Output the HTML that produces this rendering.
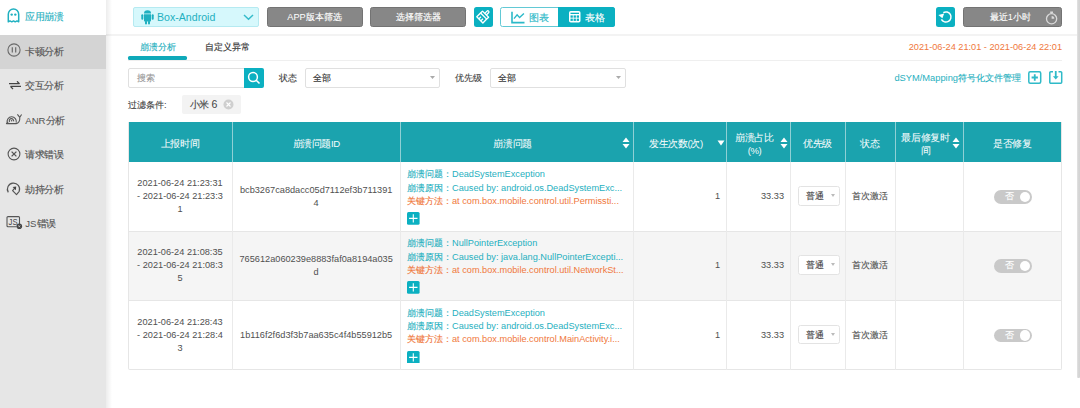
<!DOCTYPE html>
<html><head><meta charset="utf-8">
<style>
*{margin:0;padding:0;box-sizing:border-box;}
html,body{width:1080px;height:408px;overflow:hidden;background:#fff;font-family:"Liberation Sans",sans-serif;color:#333;}
.abs{position:absolute;}
#side{position:absolute;left:0;top:0;width:105.5px;height:408px;background:#e6e6e6;}
.si{position:absolute;left:0;width:105.5px;height:34.5px;font-size:9.6px;color:#525252;}
.si .c{letter-spacing:-0.55px;}
.si .t{position:absolute;left:25.3px;top:0px;line-height:34.5px;white-space:nowrap;}
.si svg{position:absolute;}
.btn{position:absolute;top:7.2px;height:19.5px;border-radius:2.5px;font-size:9.2px;line-height:19.5px;text-align:center;color:#fff;white-space:nowrap;}
.gray{background:#878787;border:1px solid #737373;line-height:19px;}
.teal{background:#0bb0c1;}
.hc{position:absolute;top:122px;height:40px;display:flex;align-items:center;justify-content:center;text-align:center;color:#f6fbfc;font-size:9.6px;letter-spacing:-0.4px;line-height:13px;padding-top:2px;}
.tc{position:absolute;display:flex;align-items:center;justify-content:center;font-size:9.2px;line-height:13px;color:#505050;padding-top:0px;}
.pc{position:absolute;font-size:9.2px;line-height:13.3px;white-space:nowrap;}
.pc .b{color:#1fb0c0;} .pc .o{color:#f0783c;}
.sel{width:42px;height:19.5px;border:1px solid #e3e3e3;border-radius:2.5px;background:#fff;font-size:9.2px;line-height:19.5px;padding-left:7.3px;color:#444;}
.tog{width:38px;height:13.5px;border-radius:7px;background:#c9c9c9;color:#fff;font-size:9px;line-height:13.5px;padding-left:11.5px;}
.tog:after{content:"";position:absolute;right:1.5px;top:1.5px;width:10.5px;height:10.5px;border-radius:50%;background:#fff;}
.c{-webkit-text-stroke:0.14px currentColor;} .hc .c{-webkit-text-stroke:0.06px currentColor;}
</style></head><body>
<div id="side">
  <div class="si" style="top:0;background:#fff;color:#1fb0c0;">
    <svg style="left:7.3px;top:8.3px" width="13" height="15" viewBox="0 0 13 15"><path d="M1.3 13.8 V6.2 A5.2 5.2 0 0 1 11.7 6.2 V13.8 L10 12.9 L8.2 13.8 L6.5 12.9 L4.8 13.8 L3 12.9 Z" fill="none" stroke="#1fb0c0" stroke-width="1.5" stroke-linejoin="round"/><circle cx="4.7" cy="6.6" r="1.2" fill="#1fb0c0"/><circle cx="8.3" cy="6.6" r="1.2" fill="#1fb0c0"/></svg>
    <span class="t"><span class="c">应用崩溃</span></span></div>
  <div class="si" style="top:34.5px;background:#d4d4d4;">
    <svg style="left:6.8px;top:8.7px" width="14" height="14" viewBox="0 0 14 14"><circle cx="7" cy="7" r="6.1" fill="none" stroke="#6a6a6a" stroke-width="1.1"/><path d="M5.3 4.3V9.5M8.7 4.3V9.5" stroke="#6a6a6a" stroke-width="1.2"/></svg>
    <span class="t"><span class="c">卡顿分析</span></span></div>
  <div class="si" style="top:69px;">
    <svg style="left:9px;top:12px" width="12" height="9" viewBox="0 0 12 9"><path d="M0 2.7H10.6 M8 0.3 L10.6 2.9 M12 5.4H1.4 M4 8 L1.4 5.4" fill="none" stroke="#444" stroke-width="1.3"/></svg>
    <span class="t"><span class="c">交互分析</span></span></div>
  <div class="si" style="top:103.5px;">
    <svg style="left:3.8px;top:9.2px" width="19" height="12" viewBox="0 0 19 12"><path d="M3.4 9.9 A4.6 4.6 0 1 1 12.2 9.6" fill="none" stroke="#555" stroke-width="1.1"/><path d="M5.6 9 A2.2 2.2 0 1 1 9.6 8.3" fill="none" stroke="#555" stroke-width="1.1"/><circle cx="7.6" cy="7.8" r="0.8" fill="#555"/><path d="M2.3 10.6 H12.3 C14.5 10.6 16 8 15.8 4.3 M15.8 4.3 L13.4 1.3 M15.8 4.3 L17.6 1.5" fill="none" stroke="#555" stroke-width="1.1"/><path d="M1.8 11.1 Q2 9.2 4.2 9 L4.6 11.1 Z" fill="#555"/></svg>
    <span class="t">ANR<span class="c">分析</span></span></div>
  <div class="si" style="top:138px;">
    <svg style="left:6.8px;top:8.6px" width="14" height="14" viewBox="0 0 14 14"><circle cx="7" cy="7" r="5.9" fill="none" stroke="#555" stroke-width="1.1"/><path d="M4.6 4.6L9.4 9.4M9.4 4.6L4.6 9.4" stroke="#555" stroke-width="1.3"/></svg>
    <span class="t"><span class="c">请求错误</span></span></div>
  <div class="si" style="top:172.5px;">
    <svg style="left:5px;top:8.5px" width="18" height="18" viewBox="0 0 18 18"><path d="M3.3 11.4 A6.1 6.1 0 1 1 14.2 10.3 L11.5 13.6 L7.6 9.6 L10.3 6.5" fill="none" stroke="#555" stroke-width="1.15" stroke-linejoin="round"/><path d="M11.2 5.6 L7.6 5.9 L10.9 9.2 Z" fill="#444"/></svg>
    <span class="t"><span class="c">劫持分析</span></span></div>
  <div class="si" style="top:207px;">
    <svg style="left:6px;top:8.8px" width="17" height="14" viewBox="0 0 17 14"><path d="M13.5 8.3 V1.6 A1 1 0 0 0 12.5 0.6 H2 A1 1 0 0 0 1 1.6 V9.8 A1 1 0 0 0 2 10.8 H10.5" fill="none" stroke="#555" stroke-width="1.1"/><text x="2.6" y="8.8" font-size="8.4" font-family="Liberation Sans" fill="#4a4a4a" textLength="9" lengthAdjust="spacingAndGlyphs">JS</text><circle cx="13.3" cy="10.3" r="2.8" fill="#444"/><path d="M12.4 9.4 L14.2 11.2 M14.2 9.4 L12.4 11.2" stroke="#ccc" stroke-width="0.8"/></svg>
    <span class="t">JS<span class="c">错误</span></span></div>
</div>

<div class="abs" style="left:105.5px;top:34px;width:971.5px;height:2px;background:#f3f3f3;"></div>
<div class="abs" style="left:105.5px;top:0;width:6px;height:408px;background:linear-gradient(to right,rgba(0,0,0,0.075),rgba(0,0,0,0));"></div>
<div class="abs" style="left:1077.2px;top:0;width:2.8px;height:377.6px;background:linear-gradient(to right,#e3e3e3,#d4d4d4 60%);border-radius:0 0 1px 1px;"></div>

<!-- top bar -->
<div class="abs" style="left:132.5px;top:7.3px;width:126.5px;height:19.5px;background:#d6f8fc;border:1px solid #b5eaf1;border-radius:2px;"></div>
<svg class="abs" style="left:141px;top:10px" width="13" height="15" viewBox="0 0 13 15"><path d="M3 4.2 H10 V10.8 A0.8 0.8 0 0 1 9.2 11.6 H3.8 A0.8 0.8 0 0 1 3 10.8 Z" fill="#1fb0c0"/><path d="M3 3.6 A3.5 3.3 0 0 1 10 3.6 Z" fill="#1fb0c0"/><rect x="0.3" y="4.3" width="2" height="5.4" rx="1" fill="#1fb0c0"/><rect x="10.7" y="4.3" width="2" height="5.4" rx="1" fill="#1fb0c0"/><rect x="4" y="10.5" width="2" height="4" rx="1" fill="#1fb0c0"/><rect x="7" y="10.5" width="2" height="4" rx="1" fill="#1fb0c0"/></svg>
<div class="abs" style="left:157px;top:6.8px;line-height:20px;font-size:10.6px;color:#1fb0c0;">Box-Android</div>
<svg class="abs" style="left:243px;top:14px" width="11" height="7" viewBox="0 0 11 7"><path d="M1 1 L5.5 5.3 L10 1" fill="none" stroke="#35bccb" stroke-width="1.5"/></svg>

<div class="btn gray" style="left:266.5px;width:96px;">APP<span class="c">版本筛选</span></div>
<div class="btn gray" style="left:370px;width:96px;"><span class="c">选择筛选器</span></div>
<div class="btn teal" style="left:474px;width:19px;"></div>
<svg class="abs" style="left:474px;top:7px" width="19" height="19" viewBox="0 0 19 19"><g transform="translate(0.5 -0.8) rotate(45 9.5 9.5)" fill="none" stroke="#fff" stroke-width="1.35" stroke-linejoin="round"><path d="M8.4 7.3 V4.1 A1.1 1.1 0 0 1 10.6 4.1 V7.3"/><rect x="5.2" y="7.3" width="8.6" height="2.7"/><path d="M5.2 10 V15.4 H13.8 V10 M8.1 12.4 V15.4 M10.9 12.4 V15.4"/></g></svg>
<div class="abs" style="left:500.3px;top:7.2px;width:115px;height:19.5px;border:1px solid #62c9d5;border-radius:2.5px;background:#fff;"></div>
<div class="abs" style="left:558px;top:7.2px;width:57.3px;height:19.5px;background:#0bb0c1;border-radius:0 2.5px 2.5px 0;"></div>
<svg class="abs" style="left:511px;top:10.5px" width="14" height="13" viewBox="0 0 14 13"><path d="M1 0.8 V11.6 H13.5" fill="none" stroke="#2bb9c8" stroke-width="1.6"/><path d="M3 7.6 L6.1 3.8 L8.6 6.6 L12.9 2.6" fill="none" stroke="#2bb9c8" stroke-width="1.4"/></svg>
<div class="abs" style="left:529px;top:7.5px;line-height:20px;font-size:10px;color:#2bb9c8;"><span class="c">图表</span></div>
<svg class="abs" style="left:569.4px;top:11.2px" width="11.5" height="11.5" viewBox="0 0 11.5 11.5"><rect x="0" y="0" width="11.5" height="11.5" rx="1.8" fill="#fff"/><g fill="#0bb0c1"><rect x="1.5" y="1.7" width="8.5" height="1.3"/><rect x="1.5" y="4.4" width="2.3" height="2.3"/><rect x="4.6" y="4.4" width="2.3" height="2.3"/><rect x="7.7" y="4.4" width="2.3" height="2.3"/><rect x="1.5" y="7.6" width="2.3" height="2.3"/><rect x="4.6" y="7.6" width="2.3" height="2.3"/><rect x="7.7" y="7.6" width="2.3" height="2.3"/></g></svg>
<div class="abs" style="left:585px;top:7.5px;line-height:20px;font-size:10px;color:#fff;"><span class="c">表格</span></div>

<div class="btn teal" style="left:935.5px;width:19.3px;"></div>
<svg class="abs" style="left:935.5px;top:7.2px" width="19" height="19" viewBox="0 0 19 19"><path d="M7.3 5.6 A5.1 5.1 0 1 1 5.4 12.45" fill="none" stroke="#fff" stroke-width="1.5"/><path d="M2.4 7.9 L8.2 6.6 L6.4 11.3 Z" fill="#fff"/></svg>
<div class="btn gray" style="left:962.5px;width:99.5px;text-indent:-4px;"><span class="c">最近</span>1<span class="c">小时</span></div>
<svg class="abs" style="left:1044px;top:9.5px" width="15" height="15" viewBox="0 0 15 15"><circle cx="7.6" cy="8.8" r="5.1" fill="none" stroke="#d9d9d9" stroke-width="1.3"/><rect x="6.2" y="1.5" width="2.8" height="1.8" fill="#d9d9d9"/><path d="M7.6 6 V8.8 H10.3 A2.7 2.7 0 0 0 7.6 6 Z" fill="#d9d9d9"/></svg>

<!-- tabs -->
<div class="abs" style="left:128px;top:39px;width:59px;text-align:center;font-size:9.4px;line-height:16px;color:#1fb0c0;"><span class="c">崩溃分析</span></div>
<div class="abs" style="left:205px;top:39px;font-size:9.4px;line-height:16px;color:#333;"><span class="c">自定义异常</span></div>
<div class="abs" style="left:128px;top:59.8px;width:934px;height:1.2px;background:#efefef;"></div>
<div class="abs" style="left:128px;top:56.4px;width:59.2px;height:3.2px;background:#0ea9b9;border-radius:1.6px;"></div>
<div class="abs" style="left:800px;top:38.5px;width:262px;text-align:right;font-size:9.2px;line-height:16px;color:#f0783c;">2021-06-24 21:01 - 2021-06-24 22:01</div>

<!-- search row -->
<div class="abs" style="left:128px;top:68px;width:117px;height:19.5px;border:1px solid #e0e0e0;border-radius:2px 0 0 2px;"></div>
<div class="abs" style="left:137px;top:68.8px;line-height:19.5px;font-size:9.3px;color:#999;"><span class="c">搜索</span></div>
<div class="abs" style="left:244px;top:68px;width:19.5px;height:19.5px;background:#0bb0c1;border-radius:0 2px 2px 0;"></div>
<svg class="abs" style="left:247px;top:71px" width="14" height="14" viewBox="0 0 14 14"><circle cx="6" cy="6" r="4.4" fill="none" stroke="#fff" stroke-width="1.5"/><path d="M9.2 9.2 L12.5 12.5" stroke="#fff" stroke-width="1.6"/></svg>
<div class="abs" style="left:279px;top:68.8px;line-height:19.5px;font-size:9.3px;color:#444;"><span class="c">状态</span></div>
<div class="abs" style="left:305px;top:68px;width:135px;height:19.5px;border:1px solid #e0e0e0;border-radius:2px;"></div>
<div class="abs" style="left:313px;top:68.8px;line-height:19.5px;font-size:9.3px;color:#333;"><span class="c">全部</span></div>
<svg class="abs" style="left:430px;top:76px" width="5" height="4" viewBox="0 0 5 4"><path d="M0 0 H5 L2.5 3 Z" fill="#aaa"/></svg>
<div class="abs" style="left:455px;top:68.8px;line-height:19.5px;font-size:9.3px;color:#444;"><span class="c">优先级</span></div>
<div class="abs" style="left:490px;top:68px;width:136px;height:19.5px;border:1px solid #e0e0e0;border-radius:2px;"></div>
<div class="abs" style="left:498px;top:68.8px;line-height:19.5px;font-size:9.3px;color:#333;"><span class="c">全部</span></div>
<svg class="abs" style="left:616px;top:76px" width="5" height="4" viewBox="0 0 5 4"><path d="M0 0 H5 L2.5 3 Z" fill="#aaa"/></svg>

<div class="abs" style="left:820px;top:70px;width:201px;text-align:right;line-height:17px;font-size:9.3px;color:#1fb0c0;">dSYM/Mapping<span class="c">符号化文件管理</span></div>
<svg class="abs" style="left:1028px;top:71px" width="13.5" height="13" viewBox="0 0 13.5 13"><rect x="0.8" y="0.8" width="11.9" height="11.4" rx="1.5" fill="none" stroke="#2fbac8" stroke-width="1.5"/><path d="M6.75 3.3 V9.7 M3.6 6.5 H9.9" stroke="#2fbac8" stroke-width="1.8"/></svg>
<svg class="abs" style="left:1049px;top:71px" width="13.5" height="13" viewBox="0 0 13.5 13"><path d="M4 0.8 H1.8 A1 1 0 0 0 0.8 1.8 V11.2 A1 1 0 0 0 1.8 12.2 H11.7 A1 1 0 0 0 12.7 11.2 V1.8 A1 1 0 0 0 11.7 0.8 H9.5" fill="none" stroke="#2fbac8" stroke-width="1.5"/><path d="M6.75 0 V6" fill="none" stroke="#2fbac8" stroke-width="1.8"/><path d="M3.9 5.3 H9.6 L6.75 8.4 Z" fill="#2fbac8"/></svg>

<!-- filter row -->
<div class="abs" style="left:128px;top:95.5px;line-height:18px;font-size:9.3px;color:#444;"><span class="c">过滤条件</span>:</div>
<div class="abs" style="left:182.2px;top:94.8px;width:58.7px;height:19.2px;background:#f3f3f3;border-radius:2px;"></div>
<div class="abs" style="left:189.5px;top:95.4px;line-height:19px;font-size:9.6px;letter-spacing:-0.2px;color:#444;"><span class="c">小米</span> <span style="font-size:10.6px">6</span></div>
<svg class="abs" style="left:223px;top:99px" width="11" height="11" viewBox="0 0 11 11"><circle cx="5.5" cy="5.5" r="5" fill="#cfcfcf"/><path d="M3.5 3.5 L7.5 7.5 M7.5 3.5 L3.5 7.5" stroke="#fff" stroke-width="1.1"/></svg>

<!-- TABLE -->
<div class="abs" style="left:128px;top:122px;width:934px;height:40px;background:#1ba3ae;"></div>
<div class="abs" style="left:128px;top:122px;width:934px;height:248px;border:1px solid #e6e6e6;border-top:none;border-radius:0 0 2px 2px;"></div>
<div class="abs" style="left:129px;top:231px;width:932px;height:69.5px;background:#f5f5f5;"></div>
<div class="abs" style="left:129px;top:230.5px;width:932px;height:1px;background:#e6e6e6;"></div>
<div class="abs" style="left:129px;top:300.0px;width:932px;height:1px;background:#e6e6e6;"></div>
<div class="abs" style="left:232px;top:122px;width:1px;height:40px;background:#8fd0d5;"></div>
<div class="abs" style="left:232px;top:162px;width:1px;height:207.5px;background:#eaeaea;"></div>
<div class="abs" style="left:400.3px;top:122px;width:1px;height:40px;background:#8fd0d5;"></div>
<div class="abs" style="left:400.3px;top:162px;width:1px;height:207.5px;background:#eaeaea;"></div>
<div class="abs" style="left:633px;top:122px;width:1px;height:40px;background:#8fd0d5;"></div>
<div class="abs" style="left:633px;top:162px;width:1px;height:207.5px;background:#eaeaea;"></div>
<div class="abs" style="left:726px;top:122px;width:1px;height:40px;background:#8fd0d5;"></div>
<div class="abs" style="left:726px;top:162px;width:1px;height:207.5px;background:#eaeaea;"></div>
<div class="abs" style="left:790px;top:122px;width:1px;height:40px;background:#8fd0d5;"></div>
<div class="abs" style="left:790px;top:162px;width:1px;height:207.5px;background:#eaeaea;"></div>
<div class="abs" style="left:845px;top:122px;width:1px;height:40px;background:#8fd0d5;"></div>
<div class="abs" style="left:845px;top:162px;width:1px;height:207.5px;background:#eaeaea;"></div>
<div class="abs" style="left:895px;top:122px;width:1px;height:40px;background:#8fd0d5;"></div>
<div class="abs" style="left:895px;top:162px;width:1px;height:207.5px;background:#eaeaea;"></div>
<div class="abs" style="left:963px;top:122px;width:1px;height:40px;background:#8fd0d5;"></div>
<div class="abs" style="left:963px;top:162px;width:1px;height:207.5px;background:#eaeaea;"></div>
<div class="hc" style="left:128px;width:104px;"><div><span class="c">上报时间</span></div></div>
<div class="hc" style="left:232px;width:168.3px;"><div><span class="c">崩溃问题</span>ID</div></div>
<div class="hc" style="left:400.3px;width:232.7px;padding-right:8px;"><div><span class="c">崩溃问题</span></div></div>
<div class="hc" style="left:633px;width:93px;padding-right:7px;"><div><span class="c">发生次数</span>(<span class="c">次</span>)</div></div>
<div class="hc" style="left:726px;width:64px;padding-right:7px;padding-top:3px;"><div><span class="c">崩溃占比</span><br>(%)</div></div>
<div class="hc" style="left:790px;width:55px;"><div><span class="c">优先级</span></div></div>
<div class="hc" style="left:845px;width:50px;"><div><span class="c">状态</span></div></div>
<div class="hc" style="left:895px;width:68px;padding-right:7px;padding-top:3px;"><div><span class="c">最后修复时</span><br><span class="c">间</span></div></div>
<div class="hc" style="left:963px;width:99px;"><div><span class="c">是否修复</span></div></div>
<svg class="abs" style="left:622px;top:136.5px" width="8" height="12" viewBox="0 0 8 12"><path d="M4 0.5 L7.5 5 H0.5 Z M0.5 7 H7.5 L4 11.5 Z" fill="#fff"/></svg>
<svg class="abs" style="left:780px;top:136.5px" width="8" height="12" viewBox="0 0 8 12"><path d="M4 0.5 L7.5 5 H0.5 Z M0.5 7 H7.5 L4 11.5 Z" fill="#fff"/></svg>
<svg class="abs" style="left:952px;top:136.5px" width="8" height="12" viewBox="0 0 8 12"><path d="M4 0.5 L7.5 5 H0.5 Z M0.5 7 H7.5 L4 11.5 Z" fill="#fff"/></svg>
<svg class="abs" style="left:716.5px;top:140px" width="8" height="6" viewBox="0 0 8 6"><path d="M0.5 0.5 H7.5 L4 5.5 Z" fill="#fff"/></svg>
<div class="tc" style="left:128px;top:162px;width:104px;height:69px;text-align:center;"><div>2021-06-24 21:23:31<br>- 2021-06-24 21:23:3<br>1</div></div>
<div class="tc" style="left:232px;top:162px;width:168.3px;height:69px;text-align:center;"><div>bcb3267ca8dacc05d7112ef3b711391<br>4</div></div>
<div class="pc" style="left:407px;top:168.4px;"><span class="b"><span class="c">崩溃问题：</span>DeadSystemException</span><br><span class="b"><span class="c">崩溃原因：</span>Caused by: android.os.DeadSystemExc...</span><br><span class="o"><span class="c">关键方法：</span>at com.box.mobile.control.util.Permissti...</span></div>
<svg class="abs" style="left:407.4px;top:212.2px" width="12.6" height="12.8" viewBox="0 0 12.6 12.8"><rect width="12.6" height="12.8" rx="1.5" fill="#0bb0c1"/><path d="M6.3 2.2 V10.6 M2.1 6.4 H10.5" stroke="#fff" stroke-width="1.1"/></svg>
<div class="tc" style="left:633px;top:162px;width:87.2px;height:69px;justify-content:flex-end;">1</div>
<div class="tc" style="left:726px;top:162px;width:58px;height:69px;justify-content:flex-end;">33.33</div>
<div class="abs sel" style="left:797.5px;top:186.3px;"><span class="c">普通</span></div>
<svg class="abs" style="left:830.8px;top:194.3px" width="4" height="3" viewBox="0 0 4 3"><path d="M0 0 H4 L2 3 Z" fill="#bbb"/></svg>
<div class="tc" style="left:845px;top:162px;width:50px;height:69px;"><div><span class="c">首次激活</span></div></div>
<div class="abs tog" style="left:993.5px;top:190px;"><span class="c">否</span></div>
<div class="tc" style="left:128px;top:231px;width:104px;height:69.5px;text-align:center;"><div>2021-06-24 21:08:35<br>- 2021-06-24 21:08:3<br>5</div></div>
<div class="tc" style="left:232px;top:231px;width:168.3px;height:69.5px;text-align:center;"><div>765612a060239e8883faf0a8194a035<br>d</div></div>
<div class="pc" style="left:407px;top:237.4px;"><span class="b"><span class="c">崩溃问题：</span>NullPointerException</span><br><span class="b"><span class="c">崩溃原因：</span>Caused by: java.lang.NullPointerExcepti...</span><br><span class="o"><span class="c">关键方法：</span>at com.box.mobile.control.util.NetworkSt...</span></div>
<svg class="abs" style="left:407.4px;top:281.2px" width="12.6" height="12.8" viewBox="0 0 12.6 12.8"><rect width="12.6" height="12.8" rx="1.5" fill="#0bb0c1"/><path d="M6.3 2.2 V10.6 M2.1 6.4 H10.5" stroke="#fff" stroke-width="1.1"/></svg>
<div class="tc" style="left:633px;top:231px;width:87.2px;height:69.5px;justify-content:flex-end;">1</div>
<div class="tc" style="left:726px;top:231px;width:58px;height:69.5px;justify-content:flex-end;">33.33</div>
<div class="abs sel" style="left:797.5px;top:255.3px;"><span class="c">普通</span></div>
<svg class="abs" style="left:830.8px;top:263.3px" width="4" height="3" viewBox="0 0 4 3"><path d="M0 0 H4 L2 3 Z" fill="#bbb"/></svg>
<div class="tc" style="left:845px;top:231px;width:50px;height:69.5px;"><div><span class="c">首次激活</span></div></div>
<div class="abs tog" style="left:993.5px;top:259px;"><span class="c">否</span></div>
<div class="tc" style="left:128px;top:300.5px;width:104px;height:69.0px;text-align:center;"><div>2021-06-24 21:28:43<br>- 2021-06-24 21:28:4<br>3</div></div>
<div class="tc" style="left:232px;top:300.5px;width:168.3px;height:69.0px;text-align:center;"><div>1b116f2f6d3f3b7aa635c4f4b55912b5</div></div>
<div class="pc" style="left:407px;top:306.9px;"><span class="b"><span class="c">崩溃问题：</span>DeadSystemException</span><br><span class="b"><span class="c">崩溃原因：</span>Caused by: android.os.DeadSystemExc...</span><br><span class="o"><span class="c">关键方法：</span>at com.box.mobile.control.MainActivity.i...</span></div>
<svg class="abs" style="left:407.4px;top:350.7px" width="12.6" height="12.8" viewBox="0 0 12.6 12.8"><rect width="12.6" height="12.8" rx="1.5" fill="#0bb0c1"/><path d="M6.3 2.2 V10.6 M2.1 6.4 H10.5" stroke="#fff" stroke-width="1.1"/></svg>
<div class="tc" style="left:633px;top:300.5px;width:87.2px;height:69.0px;justify-content:flex-end;">1</div>
<div class="tc" style="left:726px;top:300.5px;width:58px;height:69.0px;justify-content:flex-end;">33.33</div>
<div class="abs sel" style="left:797.5px;top:324.8px;"><span class="c">普通</span></div>
<svg class="abs" style="left:830.8px;top:332.8px" width="4" height="3" viewBox="0 0 4 3"><path d="M0 0 H4 L2 3 Z" fill="#bbb"/></svg>
<div class="tc" style="left:845px;top:300.5px;width:50px;height:69.0px;"><div><span class="c">首次激活</span></div></div>
<div class="abs tog" style="left:993.5px;top:328.5px;"><span class="c">否</span></div>
<!-- /TABLE -->
</body></html>
